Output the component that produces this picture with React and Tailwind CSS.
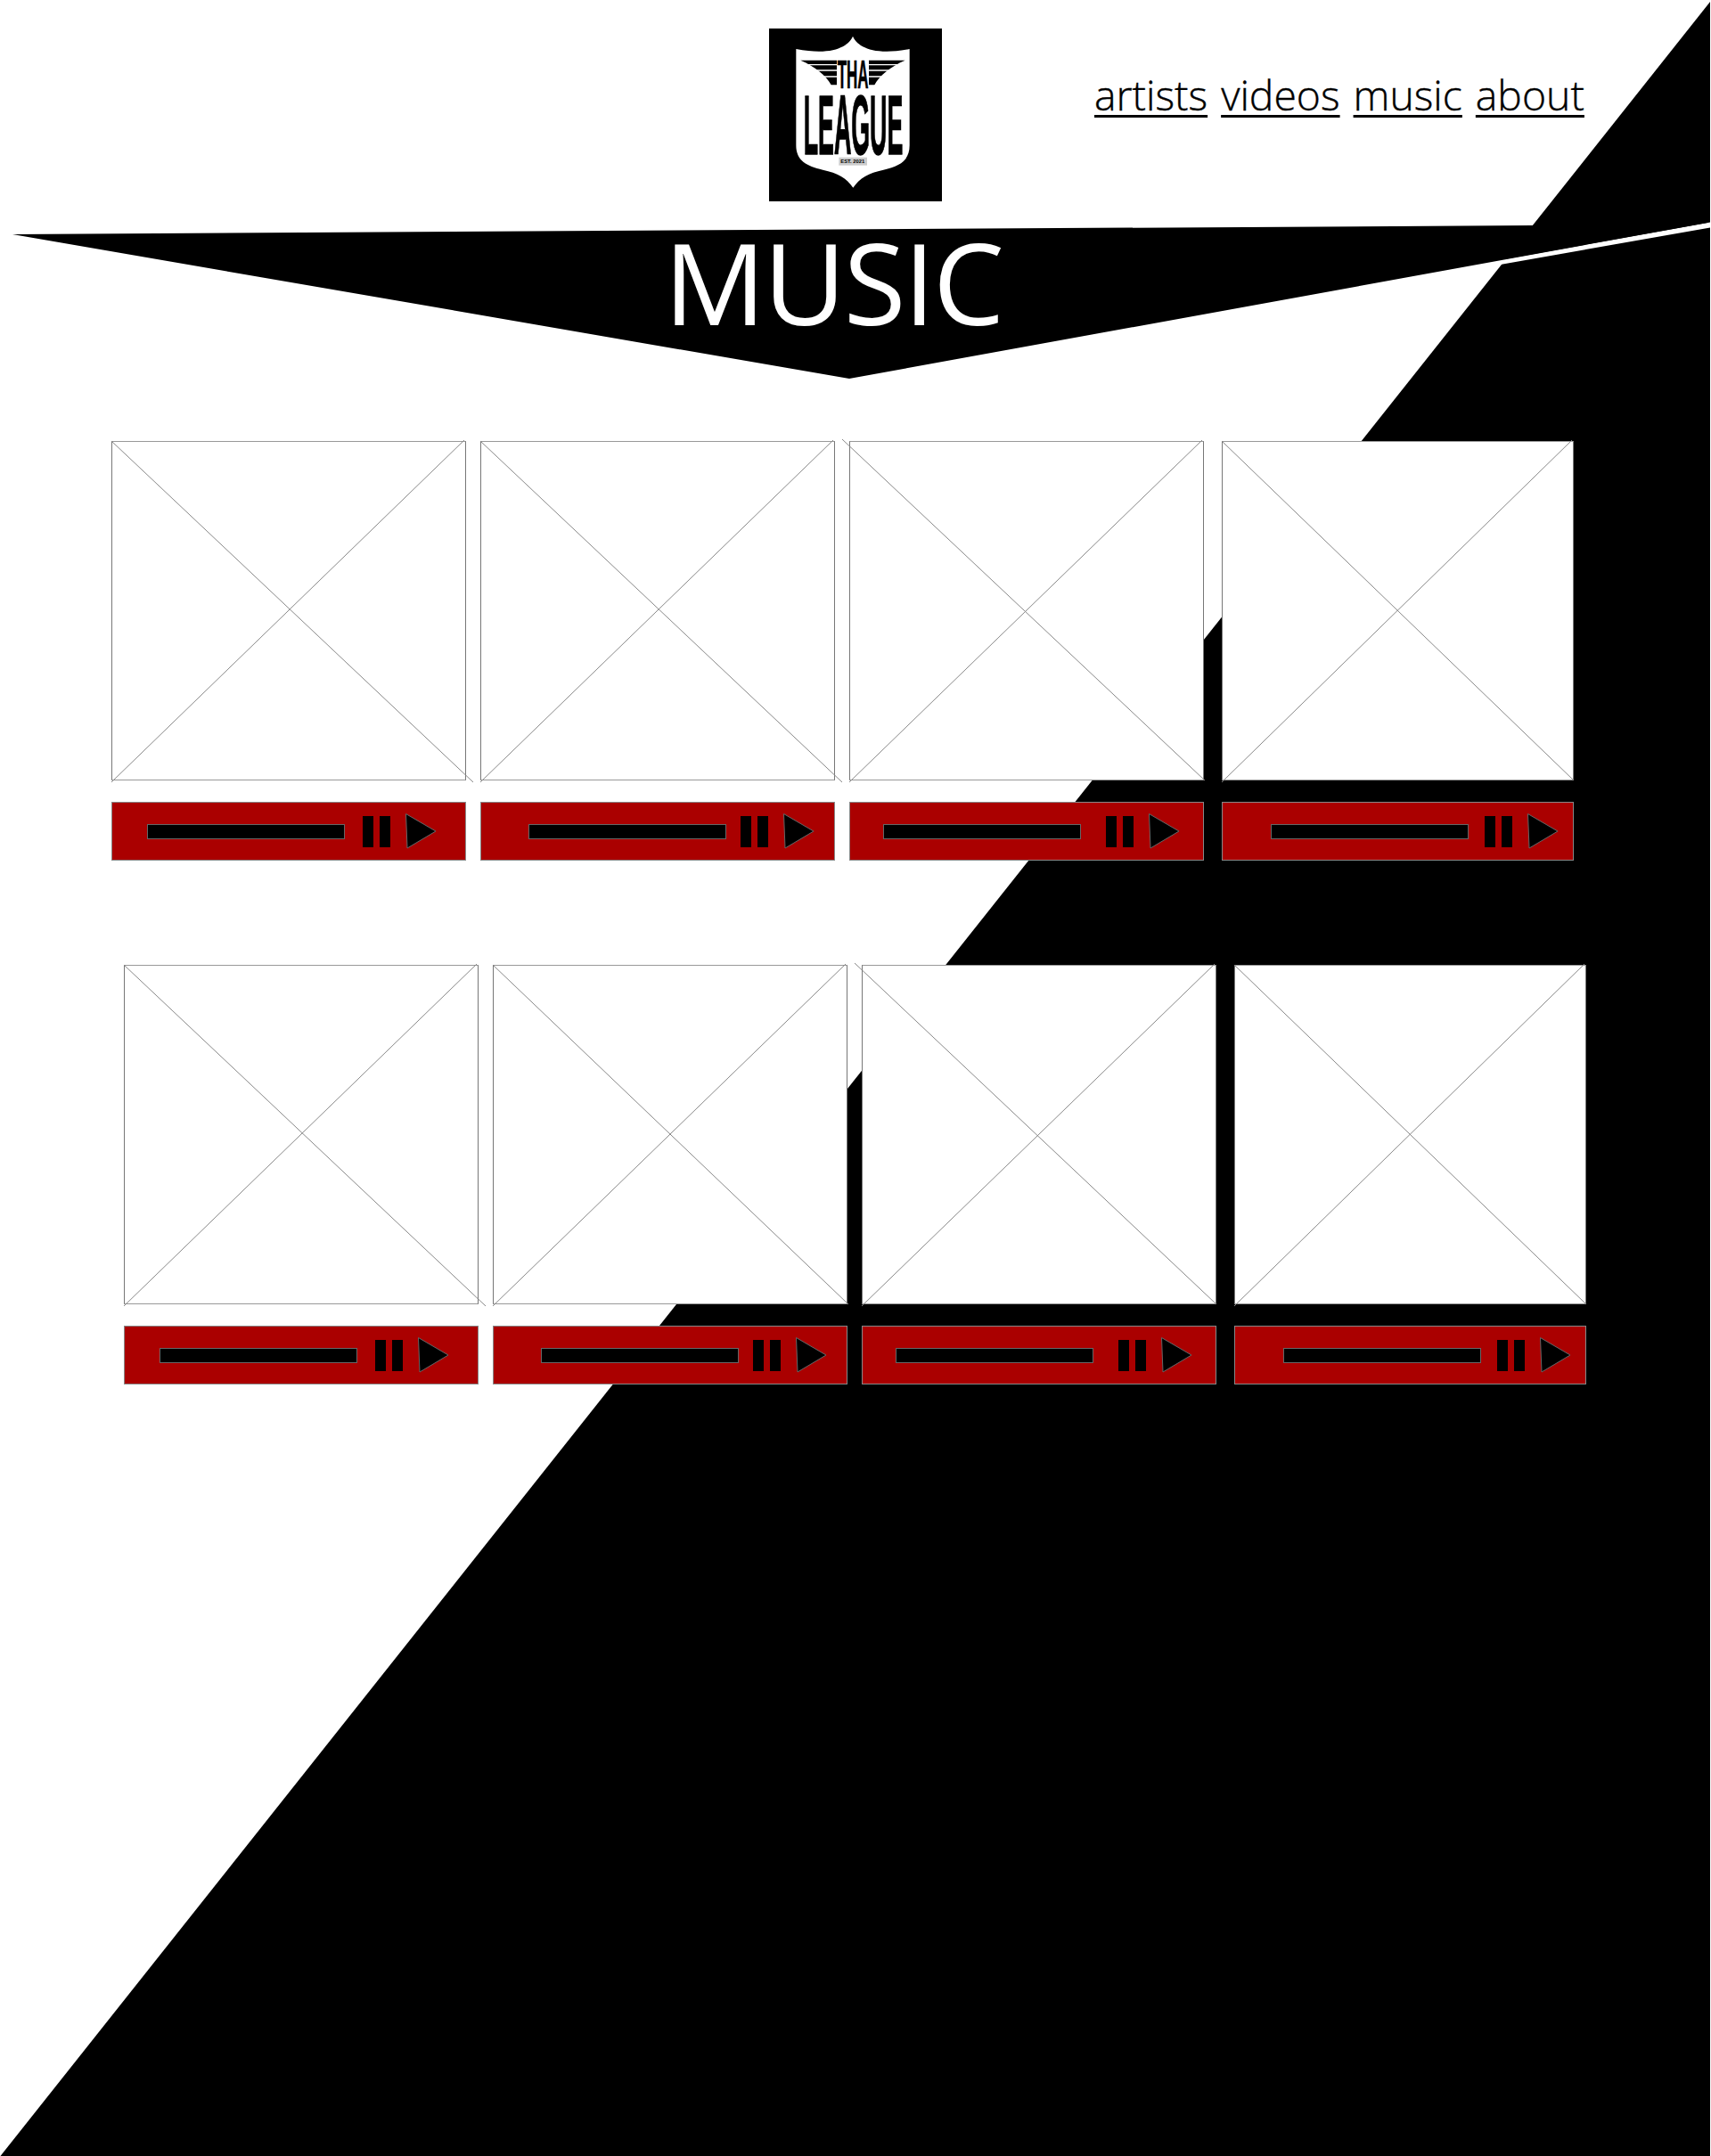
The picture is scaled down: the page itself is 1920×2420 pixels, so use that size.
import React from "react";

const columns = [
  { width: "w-[398px]", w: 398, bar: "ml-[39px]", pause: "ml-[20px]" },
  { width: "w-[398px]", w: 398, bar: "ml-[53px]", pause: "ml-[16px]" },
  { width: "w-[398px]", w: 398, bar: "ml-[37px]", pause: "ml-[28px]" },
  { width: "w-[395px] ml-[4px]", w: 395, bar: "ml-[54px]", pause: "ml-[18px]" },
];

// how far the cross overshoots the corners, per tile
const rowOneCross = [[0, 8], [0, 8], [-8, 1], [0, 0]];
const rowTwoCross = [[0, 8], [0, 1], [-8, 0], [0, 0]];

const navLinks = ["artists", "videos", "music", "about"];

const Tile = ({ w, cross }) => (
  <div className="relative h-[381px] bg-white border border-x-[#777] border-y-[#999]">
    <svg className="absolute -left-px -top-px w-full h-full overflow-visible" fill="none" stroke="#888" strokeWidth="1">
      <line x1={cross[0]} y1={cross[0] ? -2 : 0} x2={w + cross[1]} y2={cross[1] > 1 ? 383 : 381} />
      <line x1="0" y1="383" x2={w - 2} y2="-1" />
    </svg>
  </div>
);

const Player = ({ bar, pause }) => (
  <div className="flex items-center h-[66px] bg-[#aa0000] border border-[#888]">
    <div className={`${bar} w-[222px] h-[17px] bg-black border border-[#666]`}></div>
    <div className={`${pause} w-[12px] h-[35px] bg-black`}></div>
    <div className="ml-[7px] w-[12px] h-[35px] bg-black"></div>
    <svg className="ml-[17px] w-[35px] h-[40px] overflow-visible" viewBox="0 0 35 40">
      <polygon points="0.5,0.5 34,20 2,39" fill="#000" stroke="#666" strokeWidth="1" />
    </svg>
  </div>
);

const Row = ({ className, cross }) => (
  <div className={`flex gap-4 ${className}`}>
    {columns.map((item, i) => (
      <div key={i} className={`flex flex-col gap-6 ${item.width}`}>
        <Tile w={item.w} cross={cross[i]} />
        <Player bar={item.bar} pause={item.pause} />
      </div>
    ))}
  </div>
);

const Wing = () => (
  <>
    <path d="M175 143 H297 V226 H278 C262 195 225 165 175 143 Z" fill="#000" />
    <path d="M190 158 H297 M215 177 H297 M245 198 H297" stroke="#fff" strokeWidth="4" />
  </>
);

const Logo = () => (
  <div className="w-[194px] h-[194px] bg-black shrink-0">
    <svg className="w-full h-full" viewBox="69 36 582 582" fontFamily="'Liberation Sans', sans-serif" fontWeight="700">
      <path
        d="M351 62 C338 92 290 130 160 105 V430 C160 480 195 500 250 512 C300 522 330 540 352 572 C374 540 404 522 454 512 C509 500 542 480 542 430 V105 C412 130 364 92 351 62 Z"
        fill="#fff"
      />
      <Wing />
      <g transform="translate(702 0) scale(-1 1)">
        <Wing />
      </g>
      <text transform="translate(299 238) scale(0.51 1.33)" fontSize="100" stroke="#000" strokeWidth="1.5">
        THA
      </text>
      <text transform="translate(185 460) scale(0.804 2.86)" fontSize="100" stroke="#000" strokeWidth="1.5">
        LEAGUE
      </text>
      <rect x="304" y="470" width="95" height="27" fill="#ccc" />
      <text x="310" y="490" fontSize="17.5">
        EST. 2021
      </text>
    </svg>
  </div>
);

const App = () => {
  return (
    <div className="relative w-[1920px] h-[2420px] bg-white overflow-hidden font-['Open_Sans',sans-serif]">
      {/* black slant, white sliver and the banner arrow */}
      <svg className="absolute inset-0 w-full h-full" viewBox="0 0 1920 2420">
        <polygon points="1919,2 1919,2420 0.5,2420" fill="#000" />
        <polygon points="1919,249.5 1919,255.5 1685,296.7 1660,296" fill="#fff" />
        <polygon points="14,263 1719,253 1919,249.5 953,425" fill="#000" />
      </svg>

      <div className="relative">
        <header className="flex pt-8 pl-[863px]">
          <Logo />
          <nav className="flex gap-[15px] ml-[171px] mt-[45px] h-fit text-[46.3px] leading-[60px] font-light text-black [-webkit-text-stroke:0.4px_black]">
            {navLinks.map((link) => (
              <a key={link} href="#" className="underline decoration-[3px] underline-offset-[5px]">
                {link}
              </a>
            ))}
          </nav>
        </header>

        <div className="h-[269px] pl-[745px] pt-[15px]">
          <h1 className="text-[127px] leading-[150px] font-normal tracking-[-2.5px] text-white">MUSIC</h1>
        </div>

        <main className="flex flex-col gap-[117px]">
          <Row className="pl-[125px]" cross={rowOneCross} />
          <Row className="pl-[139px]" cross={rowTwoCross} />
        </main>
      </div>
    </div>
  );
};

export default App;
